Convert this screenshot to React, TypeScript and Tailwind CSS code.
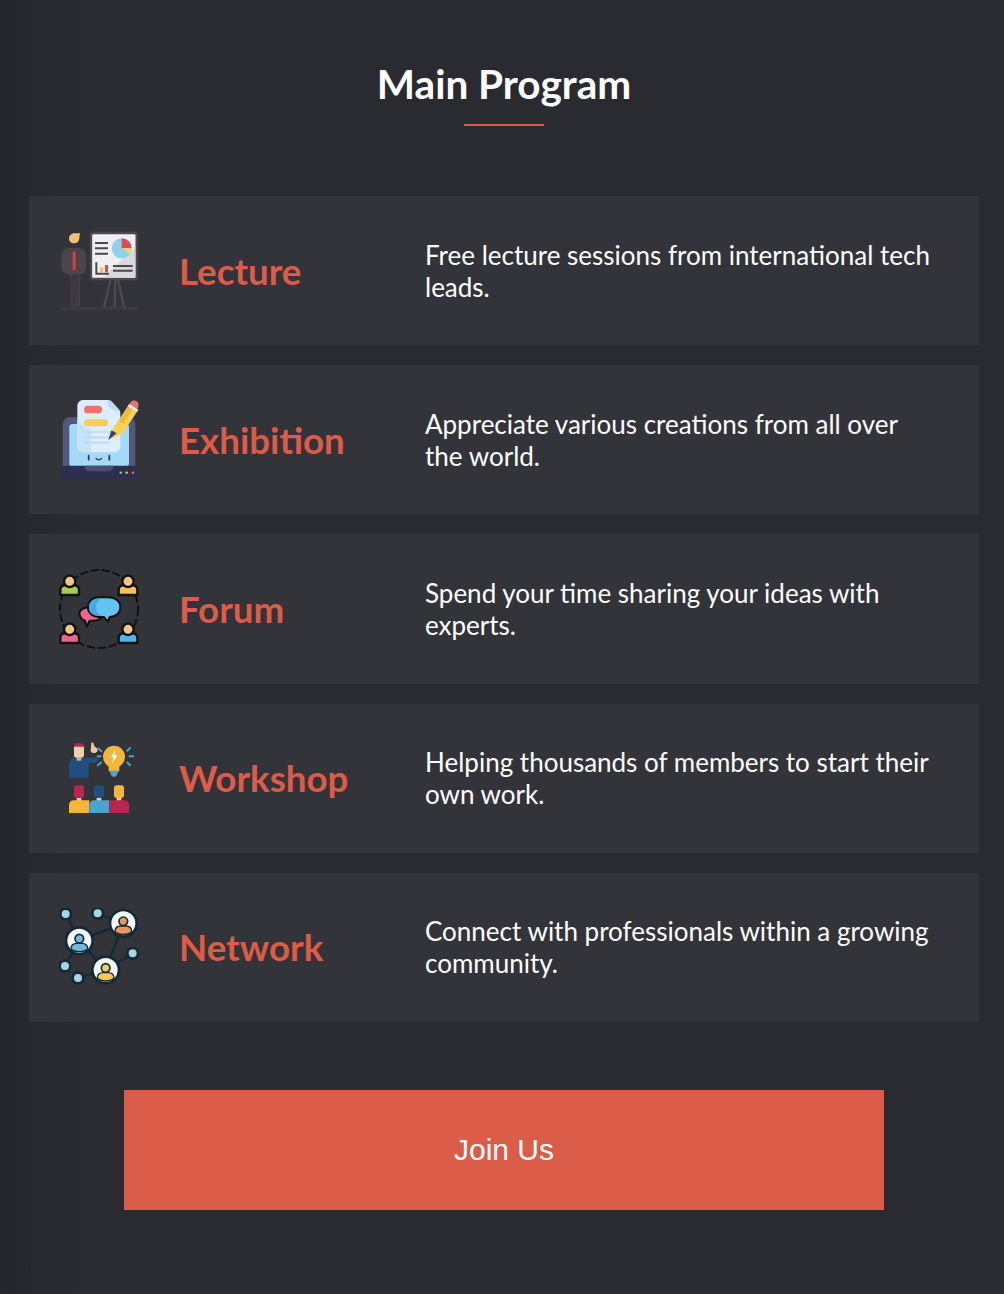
import React from 'react';

const LectureIcon = () => (
  <svg viewBox="57 63 240 240" className="w-[80px] h-[80px]">
    <path d="M87 86c0-10 8-16 18-16h15c-2 8-1 14-3 20-2 6-7 10-14 10-9 0-16-6-16-14z" fill="#f2c078" />
    <path d="M64 140c0-18 10-26 26-26h22c16 0 27 8 27 26v30c0 14-8 22-19 23v88c0 6-4 9-12 9h-6c-6 0-10-3-10-9l-3-88c-15-1-25-9-25-23z" fill="#4a454c" />
    <path d="M88 193h30l-2 90c0 5-4 8-10 8-8 0-12-3-13-8z" fill="#3e3a41" />
    <rect x="98" y="125" width="9" height="55" fill="#d8403f" />
    <rect x="62" y="291" width="231" height="9" rx="2" fill="#3e3840" />
    <path d="M212 208l-20 84M226 208l-2 84M234 208l18 84" stroke="#4d4750" strokeWidth="7" fill="none" />
    <rect x="153" y="69" width="137" height="138" rx="7" fill="#efeff1" stroke="#4d4750" strokeWidth="7" />
    <path d="M286 110v93H190z" fill="#d9d9dc" />
    <path d="M165 99h39M165 115h39M165 131h39" stroke="#4d4750" strokeWidth="6" />
    <circle cx="245" cy="115" r="30" fill="#8dd3ec" />
    <path d="M245 115V85a30 30 0 0 1 30 30z" fill="#e5474f" />
    <path d="M245 115h30a30 30 0 0 1-5 17z" fill="#f6d472" />
    <path d="M169 157v34h38" stroke="#4d4750" strokeWidth="6" fill="none" />
    <rect x="180" y="172" width="9" height="15" fill="#f1c15f" />
    <rect x="195" y="165" width="9" height="22" fill="#df4a4a" />
    <path d="M219 168h59M219 182h59" stroke="#4d4750" strokeWidth="6" />
  </svg>
);

const ExhibitionIcon = () => (
  <svg viewBox="57 60 240 240" className="w-[80px] h-[80px]">
    <path d="M68 260V135c0-14 10-24 24-24h170c14 0 24 10 24 24v125z" fill="#53587c" />
    <rect x="88" y="132" width="179" height="128" rx="10" fill="#a4daf8" />
    <rect x="57" y="257" width="240" height="42" rx="20" fill="#2e2f4f" />
    <path d="M132 257h90c-2 10-8 17-18 17h-54c-10 0-16-7-18-17z" fill="#4a4e74" />
    <path d="M130 60h72c6 0 10 2 14 6l20 22c3 3 5 7 5 12v97c0 12-8 20-20 20H132c-12 0-20-8-20-20V78c0-10 8-18 18-18z" fill="#dcedfb" />
    <path d="M112 120c10 14 24 26 42 26v71h-22c-12 0-20-8-20-20z" fill="#c8e3f8" />
    <path d="M202 60c0 22 12 32 39 36l-5-8-20-22c-4-4-8-6-14-6z" fill="#bcdcf4" />
    <rect x="132" y="77" width="54" height="23" rx="11" fill="#f0716b" />
    <rect x="132" y="118" width="72" height="21" rx="10" fill="#f6cf5e" />
    <path d="M128 156h92M128 172h92M128 188h80" stroke="#b8dcf5" strokeWidth="5" />
    <path d="M205 180l15-36 48-72 27 17-47 71z" fill="#f7d253" />
    <path d="M237 124l31-52 13 9-30 50z" fill="#efb840" />
    <path d="M205 180l9-29 16 9z" fill="#3e3f62" />
    <path d="M268 72l5-7c4-4 11-5 17-1s7 11 5 17l-4 7z" fill="#f0716b" />
    <path d="M268 72l27 17-5 6-27-17z" fill="#dfe9f4" />
    <path d="M146 227v12M208 227v12" stroke="#2e2f4f" strokeWidth="5" strokeLinecap="round" />
    <path d="M168 235c4 6 12 6 16 0" stroke="#2e2f4f" strokeWidth="4" fill="none" strokeLinecap="round" />
    <circle cx="242" cy="278" r="3.5" fill="#7fe0a0" />
    <circle cx="260" cy="278" r="3.5" fill="#f6d45e" />
    <circle cx="279" cy="278" r="3.5" fill="#f0716b" />
  </svg>
);

const Person = ({ x, y, color }: { x: number; y: number; color: string }) => (
  <g transform={`translate(${x} ${y})`}>
    <path d="M-28 39V24c0-9 6-14 14-14h28c8 0 14 5 14 14v15z" fill={color} stroke="#111" strokeWidth="7" strokeLinejoin="round" />
    <circle cx="0" cy="-2" r="17" fill="#f3c58c" stroke="#111" strokeWidth="7" />
  </g>
);

const ForumIcon = () => (
  <svg viewBox="57 57 240 240" className="w-[80px] h-[80px]">
    <circle cx="177" cy="177" r="117" fill="none" stroke="#111" strokeWidth="6" strokeDasharray="20 13" strokeLinecap="round" />
    <Person x={89} y={96} color="#a9cb52" />
    <Person x={264} y={96} color="#f8c05f" />
    <Person x={89} y={240} color="#f0628f" />
    <Person x={264} y={240} color="#52b4ea" />
    <path d="M118 190c0-10 12-18 30-18h10c18 0 30 10 30 20 0 12-12 20-28 20l-11 0-9 18-5-18c-9-2-17-12-17-22z" fill="#f0628f" stroke="#111" strokeWidth="6" strokeLinejoin="round" />
    <path d="M144 172c0-18 14-30 34-30h28c20 0 35 12 35 30 0 17-14 29-32 29l-6 14-11-14h-14c-20 0-34-12-34-29z" fill="#61c4f3" stroke="#111" strokeWidth="6" strokeLinejoin="round" />
    <path d="M168 172c0-13 8-22 18-27h-8c-20 0-31 12-31 27s11 26 31 26h8c-10-5-18-13-18-26z" fill="#46a9e2" />
  </svg>
);

const WorkshopIcon = () => (
  <svg viewBox="57 57 240 240" className="w-[80px] h-[80px]">
    <path d="M87 173v-40c0-12 8-20 20-20h12l42 0 8-5 8 12-14 10h-17v43z" fill="#1f4f7d" />
    <path d="M152 94l2-25c1-2 5-2 6 0l3 10 8 6 2 8-7 6h-9z" fill="#ecc9a3" />
    <path d="M110 113h14v9h-14z" fill="#d9ad80" />
    <rect x="102" y="75" width="30" height="38" rx="8" fill="#f0cfa9" />
    <path d="M102 80c0-8 6-11 15-11s15 3 15 11z" fill="#b8254f" />
    <path d="M173 84l13 11M171 109h13M172 137l13-11M272 82l-12 12M282 109h-16M272 137l-12-11" stroke="#4ba3cf" strokeWidth="6" />
    <circle cx="222" cy="110" r="33" fill="#f3b638" />
    <path d="M206 138h32v12c0 3-2 5-5 5h-22c-3 0-5-2-5-5z" fill="#f3b638" />
    <path d="M208 152h28l-6 14c-2 6-14 6-16 0z" fill="#4ba3cf" />
    <path d="M228 88l-16 24h9l-5 19 17-26h-10z" fill="#fff" />
    <rect x="102" y="196" width="30" height="38" rx="8" fill="#b8254f" />
    <rect x="162" y="196" width="30" height="38" rx="8" fill="#1f4f7d" />
    <rect x="222" y="196" width="30" height="38" rx="8" fill="#f3b638" />
    <path d="M110 234h14v9h-14zM170 234h14v9h-14zM230 234h14v9h-14z" fill="#f0cfa9" />
    <path d="M87 279v-24c0-8 6-14 14-14h47v38z" fill="#f3b638" />
    <path d="M148 279v-24c0-8 6-14 14-14h46v38z" fill="#4ba3cf" />
    <path d="M208 279v-38h45c8 0 14 6 14 14v24z" fill="#b8254f" />
  </svg>
);

const Avatar = ({ x, y, color }: { x: number; y: number; color: string }) => (
  <g transform={`translate(${x} ${y})`}>
    <circle r="40" fill="#f3f6fb" stroke="#102a38" strokeWidth="8" />
    <circle cy="-6" r="13" fill={color} stroke="#102a38" strokeWidth="5" />
    <path d="M-25 25c0-12 8-17 18-17h14c10 0 18 5 18 17-6 6-14 8-25 8s-19-2-25-8z" fill={color} stroke="#102a38" strokeWidth="4" />
  </g>
);

const NetworkIcon = () => (
  <svg viewBox="57 54 240 240" className="w-[80px] h-[80px]">
    <path d="M77 72l41 80 79 88M173 70l77 30M118 152l132-52-53 140M114 264l83-24 81-50M75 228l43-76" stroke="#102a38" strokeWidth="7" fill="none" />
    {[[77, 72], [173, 70], [75, 228], [114, 264], [278, 190]].map(([cx, cy]) => (
      <circle key={`${cx}-${cy}`} cx={cx} cy={cy} r="16" fill="#a9d5e3" stroke="#102a38" strokeWidth="8" />
    ))}
    <Avatar x={250} y={100} color="#e8965a" />
    <Avatar x={118} y={152} color="#6fb9dc" />
    <Avatar x={197} y={240} color="#f6c955" />
  </svg>
);

const ITEMS = [
  { icon: <LectureIcon />, title: 'Lecture', text: 'Free lecture sessions from international tech leads.' },
  { icon: <ExhibitionIcon />, title: 'Exhibition', text: 'Appreciate various creations from all over the world.' },
  { icon: <ForumIcon />, title: 'Forum', text: 'Spend your time sharing your ideas with experts.' },
  { icon: <WorkshopIcon />, title: 'Workshop', text: 'Helping thousands of members to start their own work.' },
  { icon: <NetworkIcon />, title: 'Network', text: 'Connect with professionals within a growing community.' },
];

export default function App() {
  return (
    <div className="w-[1004px] h-[1294px] bg-linear-to-r from-[#25272c] via-[#292b31] via-[8%] to-[#292b31] font-['Lato',sans-serif] overflow-hidden">
      <div className="flex flex-col items-center pt-[59px] pl-1">
        <h1 className="text-[40.5px] leading-[50px] font-bold text-white">Main Program</h1>
        <div className="w-[80px] h-[2px] bg-[#dd5b47] mt-[15px]" />
      </div>

      <div className="flex flex-col gap-5 mx-[29px] w-[950px] mt-[70px]">
        {ITEMS.map((item) => (
          <div key={item.title} className="flex items-center h-[149.2px] bg-[#33343a] pl-[30px]">
            <div className="w-[80px] h-[80px] shrink-0 mt-[1px]">{item.icon}</div>
            <div className="w-[245px] shrink-0 ml-[40px] text-[36.7px] leading-[50px] font-bold text-[#dd5b47]">{item.title}</div>
            <p className="w-[510px] ml-[1px] text-[26px] leading-[32px] text-white">{item.text}</p>
          </div>
        ))}
      </div>

      <div className="flex justify-center pl-1 mt-[68px]">
        <button className="w-[760px] h-[120px] pb-[1px] bg-[#dc5c4a] text-white text-[30px] font-['Liberation_Sans',sans-serif]">Join Us</button>
      </div>
    </div>
  );
}
